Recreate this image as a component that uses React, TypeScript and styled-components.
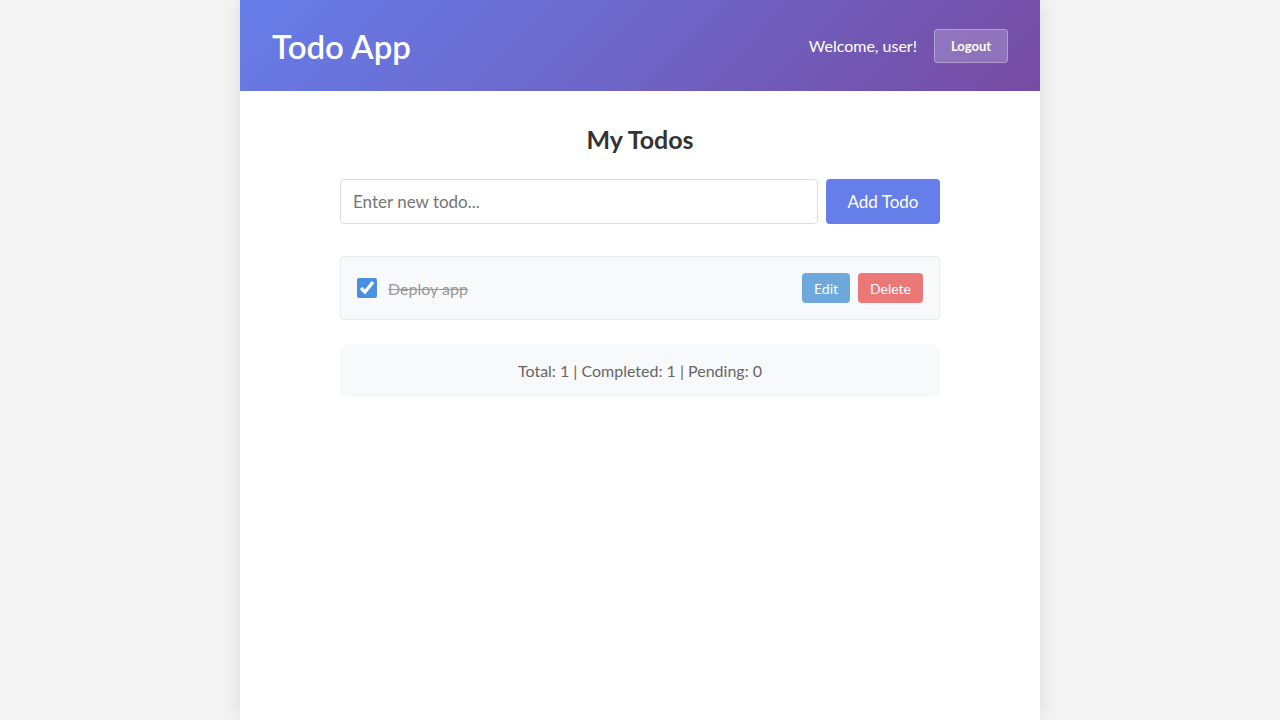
import styled, { createGlobalStyle } from 'styled-components'
import { useState } from 'react'

const FONT = `"Segoe UI", Lato, "Noto Sans", sans-serif`

const GlobalStyle = createGlobalStyle`
  * { box-sizing: border-box; }
  html, body { margin: 0; padding: 0; }
  body {
    font-family: ${FONT};
    background: #f4f4f4;
    color: #333;
  }
`

type Todo = { id: number; text: string; done: boolean }

function App() {
  const [todos, setTodos] = useState<Todo[]>([{ id: 1, text: 'Deploy app', done: true }])
  const [draft, setDraft] = useState('')

  const completed = todos.filter(t => t.done).length

  const addTodo = () => {
    if (!draft.trim()) return
    setTodos([...todos, { id: Date.now(), text: draft, done: false }])
    setDraft('')
  }

  return (
    <>
      <GlobalStyle />
      <Page>
        <Header>
          <Title>Todo App</Title>
          <UserBox>
            <span>Welcome, user!</span>
            <LogoutButton>Logout</LogoutButton>
          </UserBox>
        </Header>

        <Main>
          <Heading>My Todos</Heading>

          <AddForm onSubmit={e => { e.preventDefault(); addTodo() }}>
            <Input placeholder="Enter new todo..." value={draft} onChange={e => setDraft(e.target.value)} />
            <AddButton type="submit">Add Todo</AddButton>
          </AddForm>

          <List>
            {todos.map(todo => (
              <Item key={todo.id}>
                <Check
                  type="checkbox"
                  checked={todo.done}
                  onChange={() => setTodos(todos.map(t => t.id === todo.id ? { ...t, done: !t.done } : t))}
                />
                <ItemText $done={todo.done}>{todo.text}</ItemText>
                <Actions>
                  <SmallButton $color="#6fa8dc">Edit</SmallButton>
                  <SmallButton $color="#ec7777" onClick={() => setTodos(todos.filter(t => t.id !== todo.id))}>Delete</SmallButton>
                </Actions>
              </Item>
            ))}
          </List>

          <Stats>
            Total: {todos.length} | Completed: {completed} | Pending: {todos.length - completed}
          </Stats>
        </Main>
      </Page>
    </>
  )
}

const Page = styled.div`
  width: 800px;
  min-height: 100vh;
  margin: 0 auto;
  background: #fff;
  box-shadow: 0 0 20px rgba(0, 0, 0, 0.1);
`

const Header = styled.header`
  height: 91px;
  padding: 0 32px;
  display: flex;
  align-items: center;
  justify-content: space-between;
  background: linear-gradient(135deg, #667eea 0%, #764ba2 100%);
  color: #fff;
`

const Title = styled.h1`
  margin: 0;
  font-size: 33px;
  font-weight: 600;
`

const UserBox = styled.div`
  display: flex;
  align-items: center;
  gap: 17px;
  font-size: 16px;
`

const LogoutButton = styled.button`
  font-family: ${FONT};
  height: 34px;
  width: 74px;
  padding: 0;
  background: rgba(255, 255, 255, 0.2);
  border: 1px solid rgba(255, 255, 255, 0.3);
  border-radius: 4px;
  color: #fff;
  font-size: 13px;
  font-weight: 700;
  cursor: pointer;
`

const Main = styled.main`
  width: 600px;
  margin: 0 auto;
  padding-top: 33px;
`

const Heading = styled.h2`
  margin: 0 0 25px;
  text-align: center;
  font-size: 25px;
  font-weight: 700;
  color: #333;
`

const AddForm = styled.form`
  display: flex;
  gap: 8px;
  margin-bottom: 32px;
`

const Input = styled.input`
  flex: 1;
  height: 45px;
  padding: 0 12px;
  border: 1px solid #ddd;
  border-radius: 4px;
  font-family: ${FONT};
  font-size: 17px;
  color: #333;
  outline: none;
  &::placeholder { color: #757575; }
`

const AddButton = styled.button`
  width: 114px;
  height: 45px;
  border: none;
  border-radius: 4px;
  background: #667eea;
  color: #fff;
  font-family: ${FONT};
  font-size: 17px;
  cursor: pointer;
`

const List = styled.ul`
  list-style: none;
  margin: 0 0 24px;
  padding: 0;
`

const Item = styled.li`
  display: flex;
  align-items: center;
  height: 64px;
  padding: 0 16px;
  background: #f8f9fa;
  border: 1px solid #e9ecef;
  border-radius: 4px;
`

const Check = styled.input`
  width: 20px;
  height: 20px;
  margin: 0 11px 0 0;
  accent-color: #4a90e2;
`

const ItemText = styled.span<{ $done: boolean }>`
  flex: 1;
  font-size: 16px;
  color: ${p => (p.$done ? '#999' : '#333')};
  text-decoration: ${p => (p.$done ? 'line-through' : 'none')};
`

const Actions = styled.div`
  display: flex;
  gap: 8px;
`

const SmallButton = styled.button<{ $color: string }>`
  height: 30px;
  padding: 0 12px;
  border: none;
  border-radius: 4px;
  background: ${p => p.$color};
  color: #fff;
  font-family: ${FONT};
  font-size: 14px;
  cursor: pointer;
`

const Stats = styled.div`
  height: 53px;
  display: flex;
  align-items: center;
  justify-content: center;
  background: #f8f9fa;
  border-radius: 8px;
  color: #666;
  font-size: 16px;
`

export default App
